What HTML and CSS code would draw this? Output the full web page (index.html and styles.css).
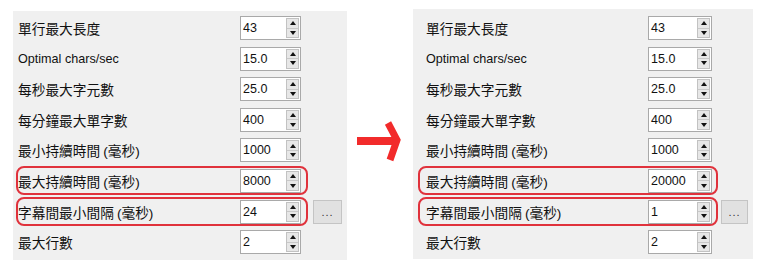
FILE: index.html
```html
<!DOCTYPE html>
<html lang="zh-Hant">
  <head>
    <meta charset="UTF-8" />
    <meta name="viewport" content="width=device-width, initial-scale=1.0" />
    <title>字幕設定 前後對照</title>
    <link rel="stylesheet" href="styles.css">
  </head>
  <body>
    <main class="compare">
      <section class="panel panel-before">
        <div class="row">
          <div class="field">
            <span class="label">單行最大長度</span>
            <div class="spin"><span class="spin-value">43</span><span class="spin-btns"><i class="up"></i><i class="down"></i></span></div>
          </div>
        </div>
        <div class="row">
          <div class="field">
            <span class="label label-latin">Optimal chars/sec</span>
            <div class="spin"><span class="spin-value">15.0</span><span class="spin-btns"><i class="up"></i><i class="down"></i></span></div>
          </div>
        </div>
        <div class="row">
          <div class="field">
            <span class="label">每秒最大字元數</span>
            <div class="spin"><span class="spin-value">25.0</span><span class="spin-btns"><i class="up"></i><i class="down"></i></span></div>
          </div>
        </div>
        <div class="row">
          <div class="field">
            <span class="label">每分鐘最大單字數</span>
            <div class="spin"><span class="spin-value">400</span><span class="spin-btns"><i class="up"></i><i class="down"></i></span></div>
          </div>
        </div>
        <div class="row">
          <div class="field">
            <span class="label">最小持續時間 <small>(毫秒)</small></span>
            <div class="spin"><span class="spin-value">1000</span><span class="spin-btns"><i class="up"></i><i class="down"></i></span></div>
          </div>
        </div>
        <div class="row">
          <div class="field highlight">
            <span class="label">最大持續時間 <small>(毫秒)</small></span>
            <div class="spin"><span class="spin-value">8000</span><span class="spin-btns"><i class="up"></i><i class="down"></i></span></div>
          </div>
        </div>
        <div class="row">
          <div class="field highlight">
            <span class="label">字幕間最小間隔 <small>(毫秒)</small></span>
            <div class="spin"><span class="spin-value">24</span><span class="spin-btns"><i class="up"></i><i class="down"></i></span></div>
          </div>
          <button class="more">...</button>
        </div>
        <div class="row">
          <div class="field">
            <span class="label">最大行數</span>
            <div class="spin"><span class="spin-value">2</span><span class="spin-btns"><i class="up"></i><i class="down"></i></span></div>
          </div>
        </div>
      </section>

      <div class="arrow">
        <svg width="46" height="46" viewBox="0 0 46 46">
          <line x1="2" y1="22" x2="41" y2="22" stroke="#f22b2b" stroke-width="8" />
          <polyline points="33,4 42,21 35,41" fill="none" stroke="#f22b2b" stroke-width="7" />
        </svg>
      </div>

      <section class="panel panel-after">
        <div class="row">
          <div class="field">
            <span class="label">單行最大長度</span>
            <div class="spin"><span class="spin-value">43</span><span class="spin-btns"><i class="up"></i><i class="down"></i></span></div>
          </div>
        </div>
        <div class="row">
          <div class="field">
            <span class="label label-latin">Optimal chars/sec</span>
            <div class="spin"><span class="spin-value">15.0</span><span class="spin-btns"><i class="up"></i><i class="down"></i></span></div>
          </div>
        </div>
        <div class="row">
          <div class="field">
            <span class="label">每秒最大字元數</span>
            <div class="spin"><span class="spin-value">25.0</span><span class="spin-btns"><i class="up"></i><i class="down"></i></span></div>
          </div>
        </div>
        <div class="row">
          <div class="field">
            <span class="label">每分鐘最大單字數</span>
            <div class="spin"><span class="spin-value">400</span><span class="spin-btns"><i class="up"></i><i class="down"></i></span></div>
          </div>
        </div>
        <div class="row">
          <div class="field">
            <span class="label">最小持續時間 <small>(毫秒)</small></span>
            <div class="spin"><span class="spin-value">1000</span><span class="spin-btns"><i class="up"></i><i class="down"></i></span></div>
          </div>
        </div>
        <div class="row">
          <div class="field highlight">
            <span class="label">最大持續時間 <small>(毫秒)</small></span>
            <div class="spin"><span class="spin-value">20000</span><span class="spin-btns"><i class="up"></i><i class="down"></i></span></div>
          </div>
        </div>
        <div class="row">
          <div class="field highlight">
            <span class="label">字幕間最小間隔 <small>(毫秒)</small></span>
            <div class="spin"><span class="spin-value">1</span><span class="spin-btns"><i class="up"></i><i class="down"></i></span></div>
          </div>
          <button class="more">...</button>
        </div>
        <div class="row">
          <div class="field">
            <span class="label">最大行數</span>
            <div class="spin"><span class="spin-value">2</span><span class="spin-btns"><i class="up"></i><i class="down"></i></span></div>
          </div>
        </div>
      </section>
    </main>
  </body>
</html>
```

FILE: styles.css
```css
* {
  margin: 0;
  padding: 0;
  box-sizing: border-box;
}
body {
  background-color: #fff;
  color: #111;
  font-family: "Liberation Sans", "Noto Sans CJK TC", sans-serif;
}
.compare {
  display: flex;
  align-items: flex-start;
}
.panel {
  display: flex;
  flex-direction: column;
  gap: 1.6px;
  background-color: #f0f0f0;
}
.panel-before {
  width: 334px;
  height: 249px;
  margin: 11px 0 0 13px;
  padding: 2.5px 0 0 3px;
}
.panel-after {
  width: 340px;
  height: 250px;
  margin-top: 9px;
  padding: 4.5px 0 0 5px;
}
.row {
  display: flex;
  align-items: center;
  height: 29px;
}
.field {
  display: flex;
  align-items: center;
  height: 29px;
  border: 2px solid transparent;
  border-radius: 8px;
}
.field.highlight {
  border-color: #e0323c;
}
.panel-before .field {
  width: 292px;
}
.panel-after .field {
  width: 300px;
  padding-left: 6px;
}
.label {
  width: 222px;
  font-family: "Noto Sans CJK TC", sans-serif;
  font-size: 13.7px;
  white-space: nowrap;
}
.label small {
  font-size: 13.7px;
  font-family: "Liberation Sans", "Noto Sans CJK TC", sans-serif;
}
.label-latin {
  font-family: "Liberation Sans", sans-serif;
  font-size: 12.6px;
}
.spin {
  display: flex;
  align-items: stretch;
  height: 24px;
  border: 1px solid #a9a9a9;
  background-color: #fff;
}
.panel-before .spin {
  width: 61px;
}
.panel-after .spin {
  width: 64px;
}
.spin-value {
  flex: 1;
  padding-left: 2px;
  font-size: 12.5px;
  line-height: 22px;
}
.spin-btns {
  display: flex;
  flex-direction: column;
  width: 13px;
  margin: 1px;
  border: 1px solid #c2c2c2;
  background-color: #e7e7e7;
}
.spin-btns i {
  flex: 1;
  display: flex;
  align-items: center;
  justify-content: center;
}
.spin-btns i.up {
  border-bottom: 1px solid #c8c8c8;
}
.spin-btns i::before {
  content: "";
  border-left: 3.5px solid transparent;
  border-right: 3.5px solid transparent;
}
.spin-btns i.up::before {
  border-bottom: 4px solid #111;
}
.spin-btns i.down::before {
  border-top: 4px solid #111;
}
.more {
  height: 24px;
  border: 1px solid #c4c4c4;
  background-color: #e1e1e1;
  color: #333;
  font-family: "Liberation Sans", sans-serif;
  font-size: 11px;
  line-height: 20px;
  letter-spacing: 1px;
}
.panel-before .more {
  width: 29px;
  margin-left: 5px;
}
.panel-after .more {
  width: 27px;
  margin-left: 3px;
}
.arrow {
  width: 66px;
  padding: 119px 0 0 8px;
}
.arrow svg {
  display: block;
}
```
